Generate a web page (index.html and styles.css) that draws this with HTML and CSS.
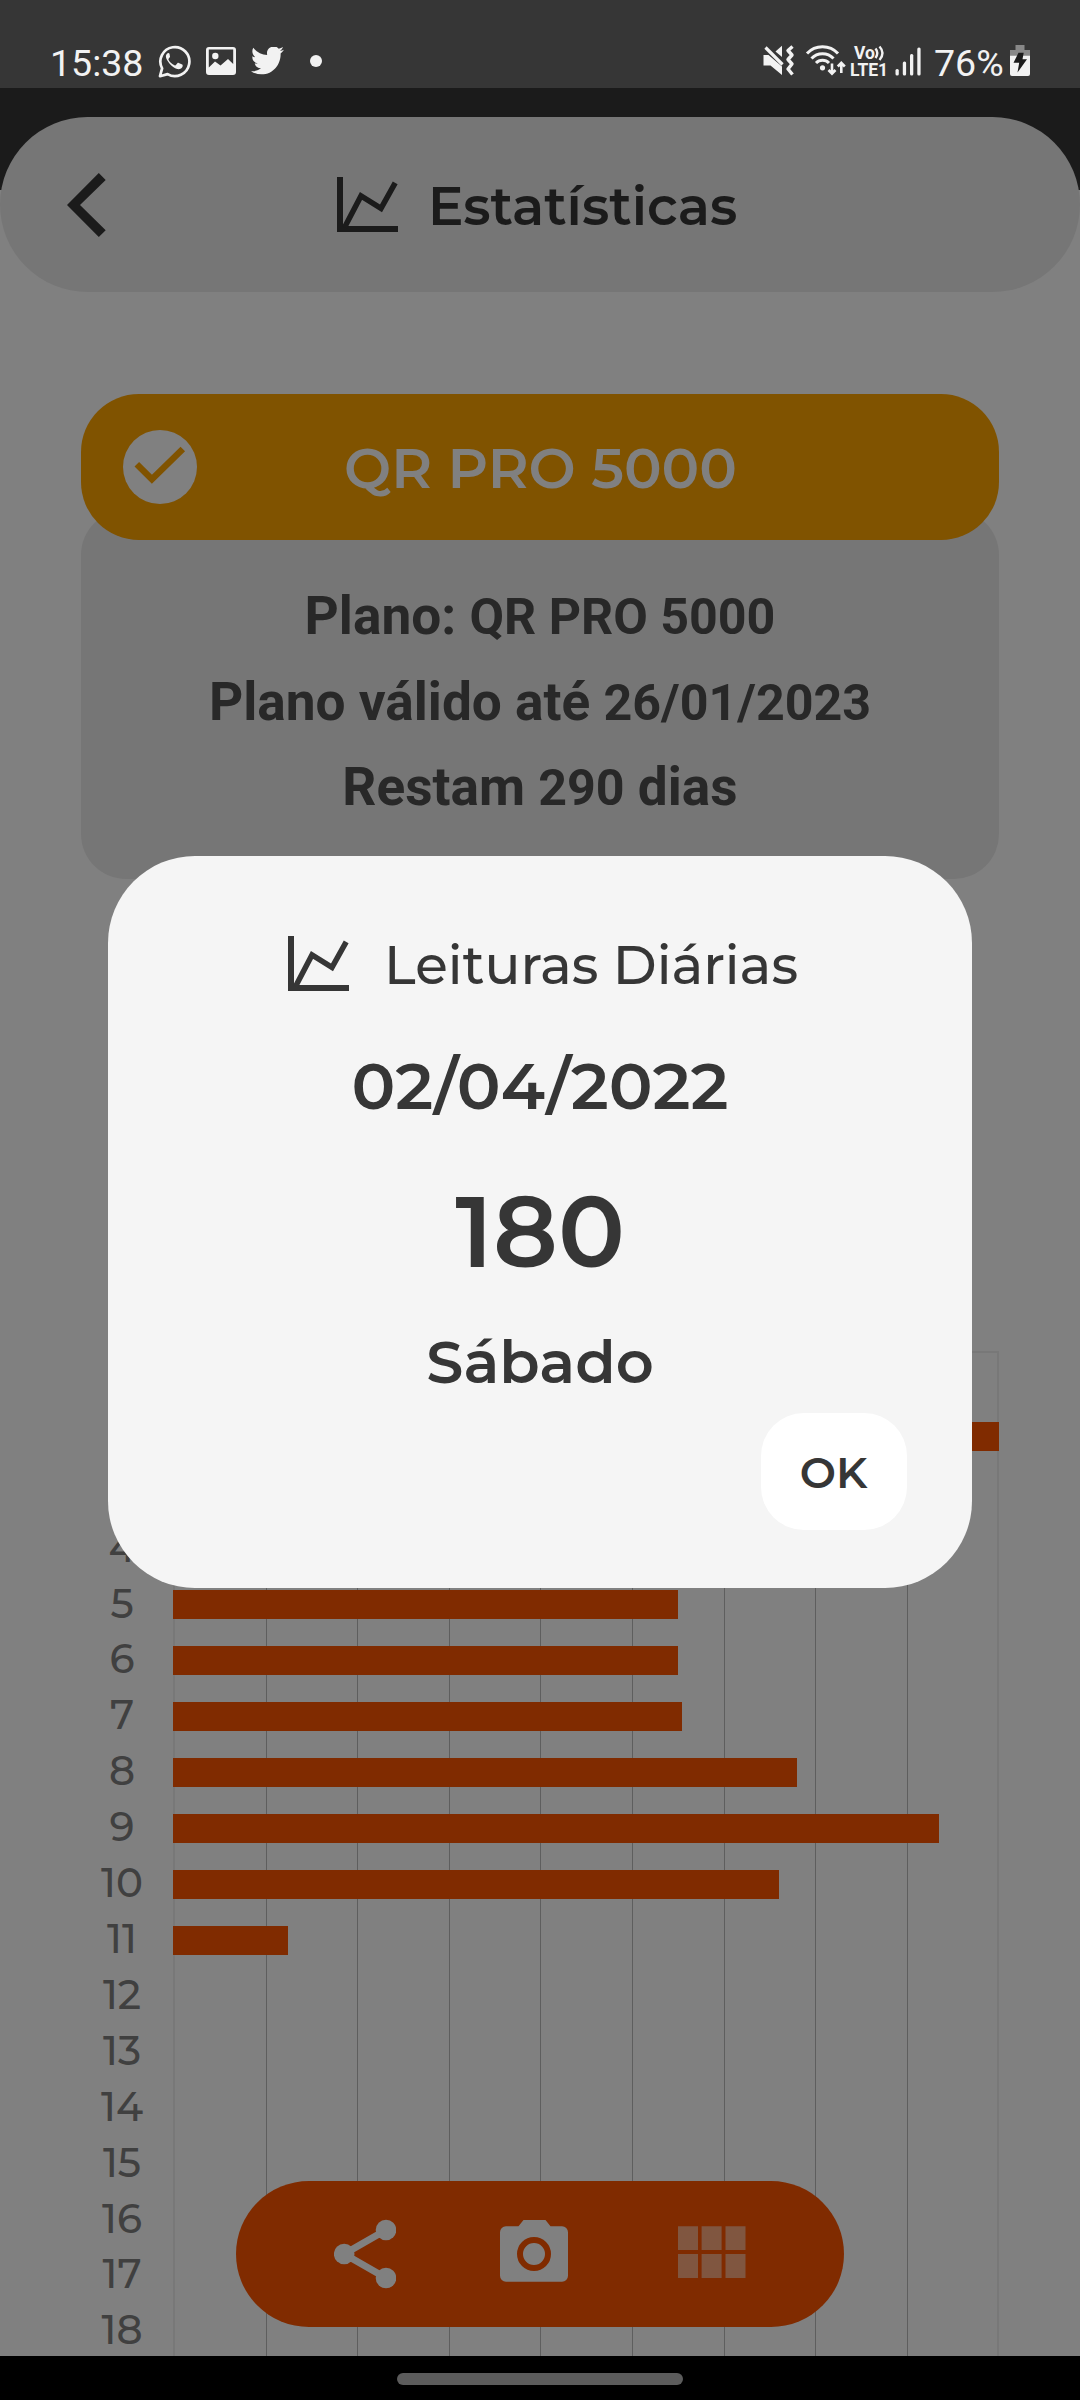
FILE: index.html
```
<!DOCTYPE html>
<html lang="pt-BR">
<head>
<meta charset="utf-8">
<title>Estatísticas</title>
<link rel="stylesheet" href="styles.css">
</head>
<body>
<div class="screen">
  <header class="status">
    <div class="status-left">
      <span class="clock">15:38</span>
      <svg class="ic-whatsapp" viewBox="0 0 33 33" width="33" height="33"><path d="M2 31.2 4.1 23.400A14.500 14.500 0 1 1 9.600 29.100Z" fill="none" stroke="#f2f2f2" stroke-width="2.700" stroke-linejoin="round"/><path d="M11.500 8.800c-.5-1-1.300-.9-1.900-.6-1.200.8-1.800 2-1.700 3.600.3 3.600 6 10.700 11.300 12.200 2.200.6 5-.7 5.400-2.600.2-1 .1-1.500-.4-1.800l-3.500-1.700c-.6-.2-.9-.1-1.300.4l-1.500 1.800c-.4.4-.8.4-1.400.1-2.600-1.200-4.500-3-5.900-5.300-.3-.5-.2-.9.2-1.300l1-1.300c.3-.4.300-.8.1-1.300Z" fill="#f2f2f2"/></svg>
      <svg class="ic-image" viewBox="0 0 30 28" width="30" height="28"><path fill="#f2f2f2" fill-rule="evenodd" d="M3 0h24a3 3 0 0 1 3 3v22a3 3 0 0 1-3 3H3a3 3 0 0 1-3-3V3a3 3 0 0 1 3-3Zm-.2 2.500V20.500L9 14.500l5.500 4 7.500-6.500 5.200 5V2.500Z"/><circle cx="9.300" cy="9" r="3.200" fill="#f2f2f2"/></svg>
      <svg class="ic-bird" viewBox="0 2.600 24 19.600" width="33" height="28" preserveAspectRatio="none"><path fill="#f2f2f2" d="M23.950 4.570a10 10 0 0 1-2.820.77 4.960 4.960 0 0 0 2.160-2.720c-.95.550-2 .950-3.130 1.180a4.920 4.920 0 0 0-8.380 4.480C7.690 8.090 4.070 6.130 1.640 3.160a4.820 4.820 0 0 0-.67 2.480c0 1.710.870 3.210 2.190 4.100a4.900 4.900 0 0 1-2.230-.62v.06a4.920 4.920 0 0 0 3.950 4.830 5 5 0 0 1-2.210.08 4.940 4.940 0 0 0 4.600 3.420A9.870 9.870 0 0 1 0 19.540a13.990 13.990 0 0 0 7.550 2.210c9.050 0 14-7.500 14-13.980 0-.210 0-.420-.020-.630a9.940 9.940 0 0 0 2.460-2.550z"/></svg>
      <span class="more-dot"></span>
    </div>
    <svg class="status-icons" viewBox="763 40 162 40" width="162" height="40">
      <g fill="#f2f2f2">
        <path d="M763.500 55h5l13.500 11.500V75l-11.500-9.500h-7Z"/><path d="M775.500 51.500 782 45.700V57Z"/>
        <path d="m765.500 47.500 17 17" stroke="#f2f2f2" stroke-width="3.200" fill="none"/>
        <path d="m792.500 46.500-4.500 4 4 4.500-4 4.500 4 4.500-4 5 4.500 5.500" fill="none" stroke="#f2f2f2" stroke-width="3.400" stroke-linejoin="round"/>
        <g fill="none" stroke="#f2f2f2" stroke-width="3"><path d="M807 53.500a21 21 0 0 1 31 0"/><path d="M811.500 58.500a15 15 0 0 1 22 0"/><path d="M816 63a9 9 0 0 1 13 0"/></g>
        <circle cx="822.500" cy="67.800" r="2.600"/>
        <path d="M832 63.500v10m-3.500-3.500 3.500 3.700 3.500-3.700M841.300 73v-10m-3.500 3.500 3.500-3.700 3.500 3.700" fill="none" stroke="#f2f2f2" stroke-width="2.600"/>
        <text class="volte" x="854" y="58.500" textLength="21">Vo</text>
        <path d="M875.500 48.500q3.600 4.500 0 9.500M879.500 46.500q6 6.500 0 13.500" fill="none" stroke="#f2f2f2" stroke-width="2.400"/>
        <text class="volte" x="850" y="75.500" textLength="38">LTE1</text>
        <rect x="895.500" y="69" width="3.300" height="6.500" rx="1.500"/><rect x="902.800" y="61.500" width="3.300" height="14" rx="1.500"/><rect x="910" y="54" width="3.300" height="21.500" rx="1.500"/><rect x="917.300" y="47.500" width="3.300" height="28" rx="1.500"/>
      </g>
    </svg>
    <span class="percent">76%</span>
    <svg class="battery" viewBox="0 0 20 31" width="20" height="31"><path fill="#888" d="M5.500 0h9v5H20v6H0V5h5.500Z"/><path fill="#f2f2f2" d="M0 10.800h20V29a2 2 0 0 1-2 2H2a2 2 0 0 1-2-2Z"/><path fill="#1b1b1b" d="M8.500 7.800h5.200l-1.200 6.500H17L7.500 27.500l1.700-9.700H3.500Z"/></svg>
  </header>

  <main class="app">
    <div class="topbar">
      <svg class="back" viewBox="0 0 39 64" width="39" height="64"><path d="M31.800 0 38.700 7 13 32l25.700 25.300L31.800 64 0 32Z" fill="#1b1b1b"/></svg>
      <svg class="chart-icon" viewBox="0 0 61 55" width="61" height="55"><path d="M3 0v52h58" fill="none" stroke="currentColor" stroke-width="6"/><path d="M7.500 50.500 24 19l20 12.300L58.200 5.800" fill="none" stroke="currentColor" stroke-width="5.500"/></svg>
      <h1 class="title">Estatísticas</h1>
    </div>

    <section class="plan">
      <div class="plan-name">
        <svg class="check" viewBox="0 0 74 74" width="74" height="74"><circle cx="37" cy="37" r="37" fill="#808080"/><path d="m13.800 34.200 15.100 15L59.800 19" fill="none" stroke="#805300" stroke-width="6.500"/></svg>
        <h2>QR PRO 5000</h2>
      </div>
      <div class="plan-info">
        <p>Plano: <span>QR PRO 5000</span></p>
        <p>Plano válido até <span>26/01/2023</span></p>
        <p>Restam <span>290</span> dias</p>
      </div>
    </section>

    <section class="chart">
      <div class="gridlines"><i></i><i></i><i></i><i></i><i></i><i></i><i></i><i></i><i></i></div>
      <div class="row"><span>1</span><b style="width:527px"></b></div>
      <div class="row"><span>2</span><b style="width:826px"></b></div>
      <div class="row"><span>3</span><b style="width:413px"></b></div>
      <div class="row"><span>4</span><b style="width:495px"></b></div>
      <div class="row"><span>5</span><b style="width:505px"></b></div>
      <div class="row"><span>6</span><b style="width:505px"></b></div>
      <div class="row"><span>7</span><b style="width:509px"></b></div>
      <div class="row"><span>8</span><b style="width:624px"></b></div>
      <div class="row"><span>9</span><b style="width:766px"></b></div>
      <div class="row"><span>10</span><b style="width:606px"></b></div>
      <div class="row"><span>11</span><b style="width:115px"></b></div>
      <div class="row"><span>12</span></div>
      <div class="row"><span>13</span></div>
      <div class="row"><span>14</span></div>
      <div class="row"><span>15</span></div>
      <div class="row"><span>16</span></div>
      <div class="row"><span>17</span></div>
      <div class="row"><span>18</span></div>
    </section>
  </main>

  <nav class="toolbar">
    <svg viewBox="0 0 62 84" width="62" height="84"><path d="M52 18 10.200 42 52 66" fill="none" stroke="#808080" stroke-width="7"/><g fill="#808080"><circle cx="10.200" cy="42" r="10.300"/><circle cx="52" cy="18" r="10.300"/><circle cx="52" cy="66" r="10.300"/></g></svg>
    <svg class="camera" viewBox="0 0 68 84" width="68" height="84"><path fill="#808080" d="M23.500 8h22l5 6.300H62a6 6 0 0 1 6 6v43.400a6 6 0 0 1-6 6H6a6 6 0 0 1-6-6V20.300a6 6 0 0 1 6-6h12.500Z"/><circle cx="34" cy="42" r="14" fill="#808080" stroke="#802b00" stroke-width="6"/></svg>
    <svg viewBox="0 0 68 84" width="68" height="84" fill="#805640"><path d="M0 14.300h20V38H0zM23.600 14.300h20V38h-20zM47.500 14.300h20V38h-20zM0 42h20v24H0zM23.600 42h20v24h-20zM47.500 42h20v24h-20z"/></svg>
  </nav>

  <div class="modal" role="dialog">
    <div class="modal-title">
      <svg class="chart-icon" viewBox="0 0 61 55" width="61" height="55"><path d="M3 0v52h58" fill="none" stroke="currentColor" stroke-width="6"/><path d="M7.500 50.500 24 19l20 12.300L58.200 5.800" fill="none" stroke="currentColor" stroke-width="5.500"/></svg>
      <span>Leituras Diárias</span>
    </div>
    <div class="date">02/04/2022</div>
    <div class="count">180</div>
    <div class="weekday">Sábado</div>
    <button class="ok">OK</button>
  </div>

  <footer class="home"><span></span></footer>
</div>
</body>
</html>
```
FILE: styles.css
```
* { box-sizing: border-box; margin: 0; padding: 0; }
body { background: #808080; font-family: Montserrat, Inter, sans-serif; }
svg { display: block; flex: none; }

.screen { position: relative; width: 1080px; height: 2400px; overflow: hidden; display: flex; flex-direction: column; }

.status { flex: none; height: 88px; padding: 40px 50px 0 50px; background: #363636; color: #f2f2f2; display: flex; font-family: Roboto, sans-serif; font-size: 37.5px; line-height: 46px; }
.status-left { display: flex; align-items: flex-start; flex: 1; }
.clock { width: 108px; }
.ic-whatsapp { margin-top: 5px; }
.ic-image { margin: 7px 0 0 15px; }
.ic-bird { margin: 7px 0 0 15px; }
.more-dot { width: 12px; height: 12px; border-radius: 50%; background: #f2f2f2; margin: 15px 0 0 26px; }
.status-icons { margin-right: 9px; }
.volte { font: 700 17.500px Roboto, sans-serif; }
.percent { width: 76px; }
.battery { margin-top: 5px; }

.app { height: 2268px; overflow: hidden; padding-top: 29px; background: linear-gradient(#1b1b1b 102px, #808080 102px); }
.topbar { height: 175px; border-radius: 88px; background: #767676; color: #1b1b1b; display: flex; align-items: center; padding-left: 66.800px; }
.topbar .chart-icon { margin-left: 231.200px; }
.title { margin: 3px 0 0 30px; font-size: 53px; font-weight: 600; line-height: 64px; }

.plan { margin: 102px 81px 0; }
.plan-name { position: relative; height: 146px; border-radius: 58px; background: #805300; color: #808080; display: flex; align-items: center; padding-left: 42px; z-index: 1; }
.plan-name h2 { margin: 2px 0 0 147px; font-size: 56px; font-weight: 600; line-height: 68px; }
.plan-info { height: 369px; margin-top: -30px; padding-top: 64px; border-radius: 45px; background: #767676; color: #282828; font-family: Roboto, sans-serif; font-size: 53.200px; font-weight: 700; text-align: center; line-height: 85.500px; }
.plan-info p { height: 85.500px; }
.plan-info span { font-size: 50.200px; }

.chart { position: relative; margin-top: 474px; }
.gridlines { position: absolute; left: 173px; top: -2px; width: 826px; height: 1100px; border: 2px solid #787878; display: grid; grid-template-columns: repeat(8, 91.600px) 1fr; }
.gridlines i { border-right: 1px solid #5e5e5e; }
.gridlines i:last-child { border: 0; }
.row { position: relative; height: 55.920px; padding-left: 70px; display: flex; align-items: center; }
.row span { width: 103px; padding: 0 0 2px 1px; color: #404040; font-size: 40.500px; font-weight: 500; line-height: 50px; text-align: center; }
.row b { height: 29px; background: #802b00; }

.toolbar { position: absolute; left: 236px; top: 2181px; width: 608px; height: 146px; border-radius: 73px; background: #802b00; display: flex; align-items: center; justify-content: space-between; padding: 0 98px 0 98px; }
.camera { margin: 0 3px 0 -3px; }

.modal { position: absolute; left: 108px; top: 856px; width: 864px; height: 732px; border-radius: 87px; background: #f5f5f5; color: #363636; padding-top: 78px; font-weight: 600; text-align: center; }
.modal-title { height: 60px; padding-left: 180px; display: flex; align-items: center; gap: 35px; font-size: 53.200px; font-weight: 500; line-height: 60px; white-space: nowrap; }
.modal-title .chart-icon { margin-top: -1px; }
.modal-title span { margin-top: 2px; }
.date { margin-top: 51.500px; font-size: 65.200px; line-height: 80px; }
.count { margin-top: 46px; font-size: 99.500px; line-height: 120px; }
.weekday { margin-top: 35px; font-size: 59px; line-height: 70px; }
.ok { display: block; margin: 16.500px 0 0 653px; width: 146px; height: 117px; border: 0; border-radius: 43px; background: #fff; color: #363636; font: 600 43px Montserrat, Inter, sans-serif; padding: 2px 1px 0 0; }

.home { flex: none; height: 44px; background: #000; display: flex; justify-content: center; padding-top: 16.500px; }
.home span { width: 286px; height: 12px; border-radius: 6px; background: #5c5c5c; }
```
